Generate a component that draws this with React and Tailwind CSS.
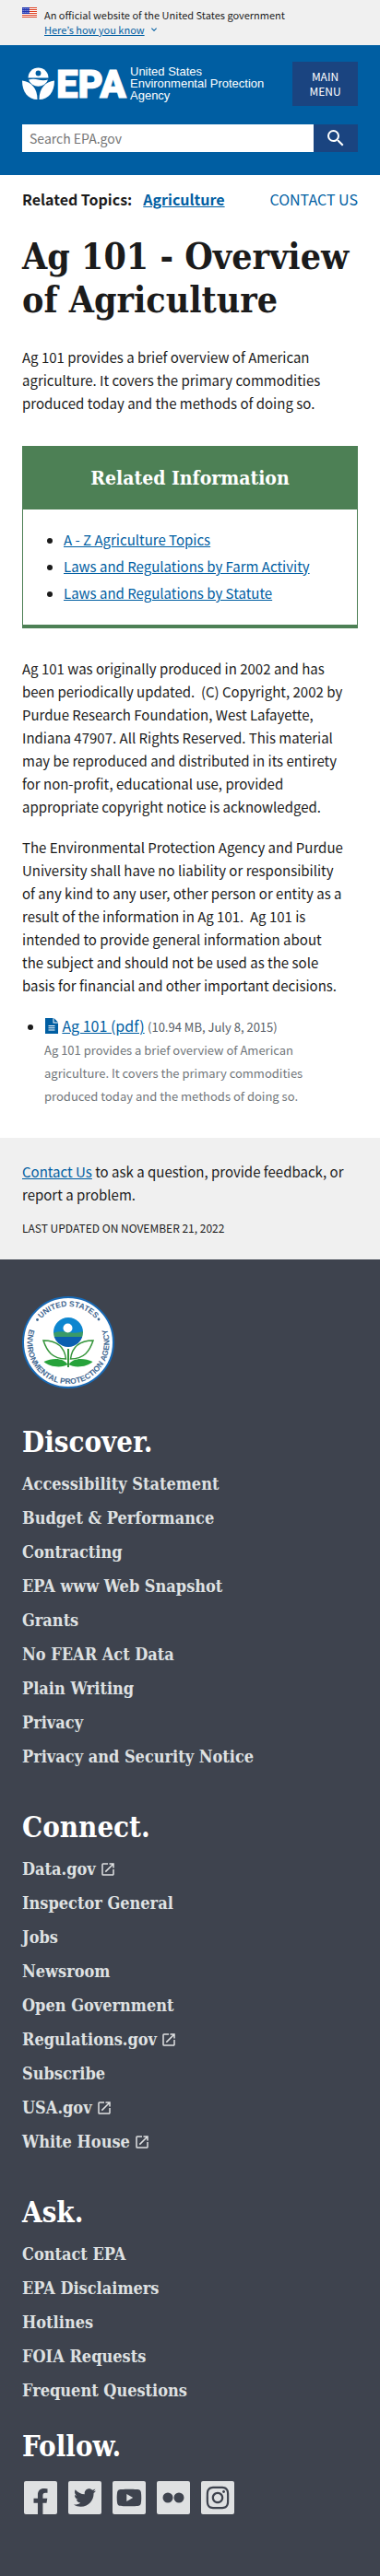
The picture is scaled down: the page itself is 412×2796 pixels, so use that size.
import React from "react";
import { MdSearch, MdLaunch, MdExpandMore } from "react-icons/md";
import { FaFacebookF, FaTwitter, FaYoutube, FaInstagram } from "react-icons/fa";

const discover = [
  "Accessibility Statement",
  "Budget & Performance",
  "Contracting",
  "EPA www Web Snapshot",
  "Grants",
  "No FEAR Act Data",
  "Plain Writing",
  "Privacy",
  "Privacy and Security Notice",
];
const connect = [
  "Data.gov",
  "Inspector General",
  "Jobs",
  "Newsroom",
  "Open Government",
  "Regulations.gov",
  "Subscribe",
  "USA.gov",
  "White House",
];
const ask = ["Contact EPA", "EPA Disclaimers", "Hotlines", "FOIA Requests", "Frequent Questions"];
const external = ["Data.gov", "Regulations.gov", "USA.gov", "White House"];
const related = ["A - Z Agriculture Topics", "Laws and Regulations by Farm Activity", "Laws and Regulations by Statute"];

function Flag() {
  return (
    <svg viewBox="0 0 16 11" className="mt-2 h-[11px] w-4 shrink-0" aria-hidden="true">
      <rect width="16" height="11" fill="#fff" />
      {[0, 2, 4, 6, 8, 10].map((y) => (
        <rect key={y} y={y} width="16" height="1" fill="#db3e1f" />
      ))}
      <rect width="8" height="7" fill="#1e33b1" />
      {[1, 3, 5].map((y) =>
        [1, 3, 5, 7].map((x) => <rect key={`${x}-${y}`} x={x - 0.3} y={y} width="0.8" height="0.8" fill="#fff" />)
      )}
    </svg>
  );
}

function Logo() {
  return (
    <svg viewBox="0 -5 270 48" className="w-full max-w-[270px] overflow-visible" role="img" aria-label="United States Environmental Protection Agency">
      <g fill="#fff">
        <path d="M6.500 12.500a11 11 0 0 1 22 0z" />
        <circle cx="17.500" cy="7.500" r="2.900" fill="#005ea2" />
        <path d="M7 14.500q5-1.500 10.500 0t10.500 0a11 10.500 0 0 1-21 0z" />
        <path d="M0 15.500c10 1.500 16.500 8 16.500 20.500C6.500 36 0 28 0 15.500z" />
        <path d="M35 15.500c-10 1.500-16.500 8-16.500 20.500 10 0 16.500-8 16.500-20.500z" />
        <text x="37" y="34" fontFamily="Roboto, sans-serif" fontWeight="900" fontSize="42" stroke="#fff" strokeWidth="1">EPA</text>
        <g fontFamily="'Liberation Sans', sans-serif" fontSize="13">
          <text x="117" y="10">United States</text>
          <text x="117" y="23">Environmental Protection</text>
          <text x="117" y="36">Agency</text>
        </g>
      </g>
    </svg>
  );
}

function Seal() {
  return (
    <svg viewBox="0 0 100 100" className="size-[100px]" role="img" aria-label="U.S. EPA seal">
      <defs>
        <path id="sealTop" d="M11 50a39 39 0 0 1 78 0" />
        <path id="sealBottom" d="M12 27.500a44.500 44.500 0 1 0 76 0" />
      </defs>
      <circle cx="50" cy="50" r="49" fill="#fff" stroke="#1769b5" strokeWidth="2" />
      <g fontFamily="'Liberation Sans', sans-serif" fontSize="8.500" fontWeight="700" fill="#3f6791" textAnchor="middle">
        <text>
          <textPath href="#sealTop" startOffset="50%">UNITED STATES</textPath>
        </text>
        <text>
          <textPath href="#sealBottom" startOffset="50%">ENVIRONMENTAL PROTECTION AGENCY</textPath>
        </text>
      </g>
      <circle cx="16.500" cy="25.500" r="1.400" fill="#3f6791" />
      <circle cx="83" cy="25" r="1.400" fill="#3f6791" />
      <clipPath id="bloom">
        <circle cx="50" cy="39" r="16" />
      </clipPath>
      <g clipPath="url(#bloom)">
        <rect x="33" y="22" width="34" height="18" fill="#0d86cf" />
        <path d="M33 40q8-3 17-1t17-1v7H33z" fill="#3a9a68" />
        <rect x="33" y="44" width="34" height="12" fill="#0b5fb0" />
      </g>
      <circle cx="49.500" cy="34.500" r="5" fill="#fff" />
      <path d="M50 57v20" stroke="#35953b" strokeWidth="2" />
      <path d="M23 48c16 0 23 8 24.500 20C33 68 27 60 23 48zM77 48c-16 0-23 8-24.500 20C67 68 73 60 77 48z" fill="#fff" stroke="#35953b" strokeWidth="1.500" />
      <path d="M49.500 74c-4-7-16-8-26-3 6 6 20 7 26 3zM50.500 74c4-7 16-8 26-3-6 6-20 7-26 3z" fill="#27a33b" />
    </svg>
  );
}

const serif = "font-['DejaVu_Serif_Condensed','DejaVu_Serif',serif]";

function FooterList({ title, items }) {
  return (
    <nav aria-label={title}>
      <h2 className={`text-[31px] leading-9 font-bold text-white ${serif}`}>{title}</h2>
      <ul className="mt-[9px]">
        {items.map((t) => (
          <li key={t} className={`h-[37px] text-lg leading-[37px] font-bold text-[#dfe1e2] ${serif}`}>
            <a href="#" className="inline-flex items-center gap-1">
              {t}
              {external.includes(t) && <MdLaunch className="size-[18px]" aria-hidden="true" />}
            </a>
          </li>
        ))}
      </ul>
    </nav>
  );
}

function SocialLink({ label, children }) {
  return (
    <a href="#" aria-label={label} className="flex size-9 items-center justify-center overflow-hidden rounded-xs bg-[#dfe1e2] text-[#3e434e]">
      {children}
    </a>
  );
}

export default function App() {
  return (
    <div className="bg-white font-['Noto_Sans_CJK_KR',sans-serif] text-[15px] leading-[25px] text-[#1b1b1b]">
      <div className="flex h-[49px] gap-2 bg-[#f0f0f0] px-6">
        <Flag />
        <div className="pt-2 text-[11px] leading-4">
          <p>An official website of the United States government</p>
          <button type="button" className="flex items-center gap-1 text-[#005ea2]">
            <span className="underline">Here’s how you know</span>
            <MdExpandMore className="size-3" aria-hidden="true" />
          </button>
        </div>
      </div>

      <header className="h-[141px] bg-[#005ea2] px-6 pt-[18px]">
        <div className="flex items-start justify-between">
          <a href="#" className="block min-w-0 flex-1">
            <Logo />
          </a>
          <button type="button" className="h-12 w-[71px] shrink-0 bg-[#1a4480] px-3 text-xs leading-4 text-white">
            MAIN MENU
          </button>
        </div>
        <form className="mt-5 flex h-[30px]" onSubmit={(e) => e.preventDefault()}>
          <input
            type="search"
            aria-label="Search EPA.gov"
            placeholder="Search EPA.gov"
            className="h-full min-w-0 flex-1 bg-white px-2 text-sm placeholder:text-[#757575]"
          />
          <button type="submit" aria-label="Search" className="flex w-12 items-center justify-center bg-[#1a4480] text-white">
            <MdSearch className="size-6" />
          </button>
        </form>
      </header>

      <main className="px-6 pt-[14px]">
        <div className="flex items-center justify-between text-base leading-[25px]">
          <p className="flex gap-3 font-bold">
            Related Topics:
            <a href="#" className="text-[#005ea2] underline">Agriculture</a>
          </p>
          <a href="#" className="text-[#005ea2]">CONTACT US</a>
        </div>
        <h1 className={`mt-[26px] text-[39px] leading-[47px] font-bold ${serif}`}>Ag 101 - Overview of Agriculture</h1>
        <p className="mt-[26px]">
          Ag 101 provides a brief overview of American agriculture. It covers the primary commodities produced today and the methods of doing so.
        </p>

        <section className="mt-[34px] border border-b-4 border-[#4d8055]">
          <h2 className={`bg-[#4d8055] py-4 text-center text-[21px] leading-9 font-bold text-white ${serif}`}>Related Information</h2>
          <ul className="flex list-disc flex-col gap-1 pt-5 pb-[22px] pl-11">
            {related.map((t) => (
              <li key={t}>
                <a href="#" className="text-[#005ea2] underline">{t}</a>
              </li>
            ))}
          </ul>
        </section>

        <p className="mt-[31px] pr-[10px]">
          Ag 101 was originally produced in 2002 and has been periodically updated.&nbsp; (C) Copyright, 2002 by Purdue Research Foundation, West Lafayette, Indiana 47907. All Rights Reserved. This material may be reproduced and distributed in its entirety for non-profit, educational use, provided appropriate copyright notice is acknowledged.
        </p>
        <p className="mt-[19px] pr-[10px]">
          The Environmental Protection Agency and Purdue University shall have no liability or responsibility of any kind to any user, other person or entity as a result of the information in Ag 101.&nbsp; Ag 101 is intended to provide general information about the&nbsp;subject and should not be used as the sole basis for financial and other important decisions.
        </p>
        <ul className="mt-[19px] list-disc pl-6">
          <li>
            <svg viewBox="0 0 14 17" className="mr-px ml-px inline-block h-[17px] w-[14px] align-[-2px]" aria-hidden="true">
              <path d="M0 0h8.500v5.500H14V17H0zM9.500 0 14 4.500H9.500z" fill="#005ea2" />
              <path d="M3.500 8h7v1h-7zm0 2.300h7v1h-7zm0 2.300h7v1h-7z" fill="#fff" />
            </svg>{" "}
            <a href="#" className="text-base leading-[25px] text-[#005ea2] underline">Ag 101 (pdf)</a>{" "}
            <span className="text-[13px] text-[#565c65]">(10.94 MB, July 8, 2015)</span>
            <p className="text-[13px] leading-[25px] text-[#71767a]">
              Ag 101 provides a brief overview of American agriculture. It covers the primary commodities produced today and the methods of doing so.
            </p>
          </li>
        </ul>
      </main>

      <section className="mt-[33px] h-[132px] bg-[#f0f0f0] px-6 pt-6">
        <p>
          <a href="#" className="text-[#005ea2] underline">Contact Us</a> to ask a question, provide feedback, or report a problem.
        </p>
        <p className="mt-3 text-xs leading-6">LAST UPDATED ON NOVEMBER 21, 2022</p>
      </section>

      <footer className="bg-[#3e434e] px-6 pt-10 pb-[67px]">
        <Seal />
        <div className="mt-10 flex flex-col gap-10">
          <FooterList title="Discover." items={discover} />
          <FooterList title="Connect." items={connect} />
          <FooterList title="Ask." items={ask} />
        </div>
        <h2 className={`mt-6 text-[31px] leading-9 font-bold text-white ${serif}`}>Follow.</h2>
        <div className="mt-5 flex gap-3 pl-[2px]">
          <SocialLink label="Facebook"><FaFacebookF className="mt-2 size-7" /></SocialLink>
          <SocialLink label="Twitter"><FaTwitter className="size-6" /></SocialLink>
          <SocialLink label="YouTube"><FaYoutube className="size-7" /></SocialLink>
          <SocialLink label="Flickr">
            <svg viewBox="0 0 24 12" className="h-3 w-6" fill="currentColor">
              <circle cx="6" cy="6" r="5.500" />
              <circle cx="18" cy="6" r="5.500" />
            </svg>
          </SocialLink>
          <SocialLink label="Instagram"><FaInstagram className="size-7" /></SocialLink>
        </div>
      </footer>
    </div>
  );
}
